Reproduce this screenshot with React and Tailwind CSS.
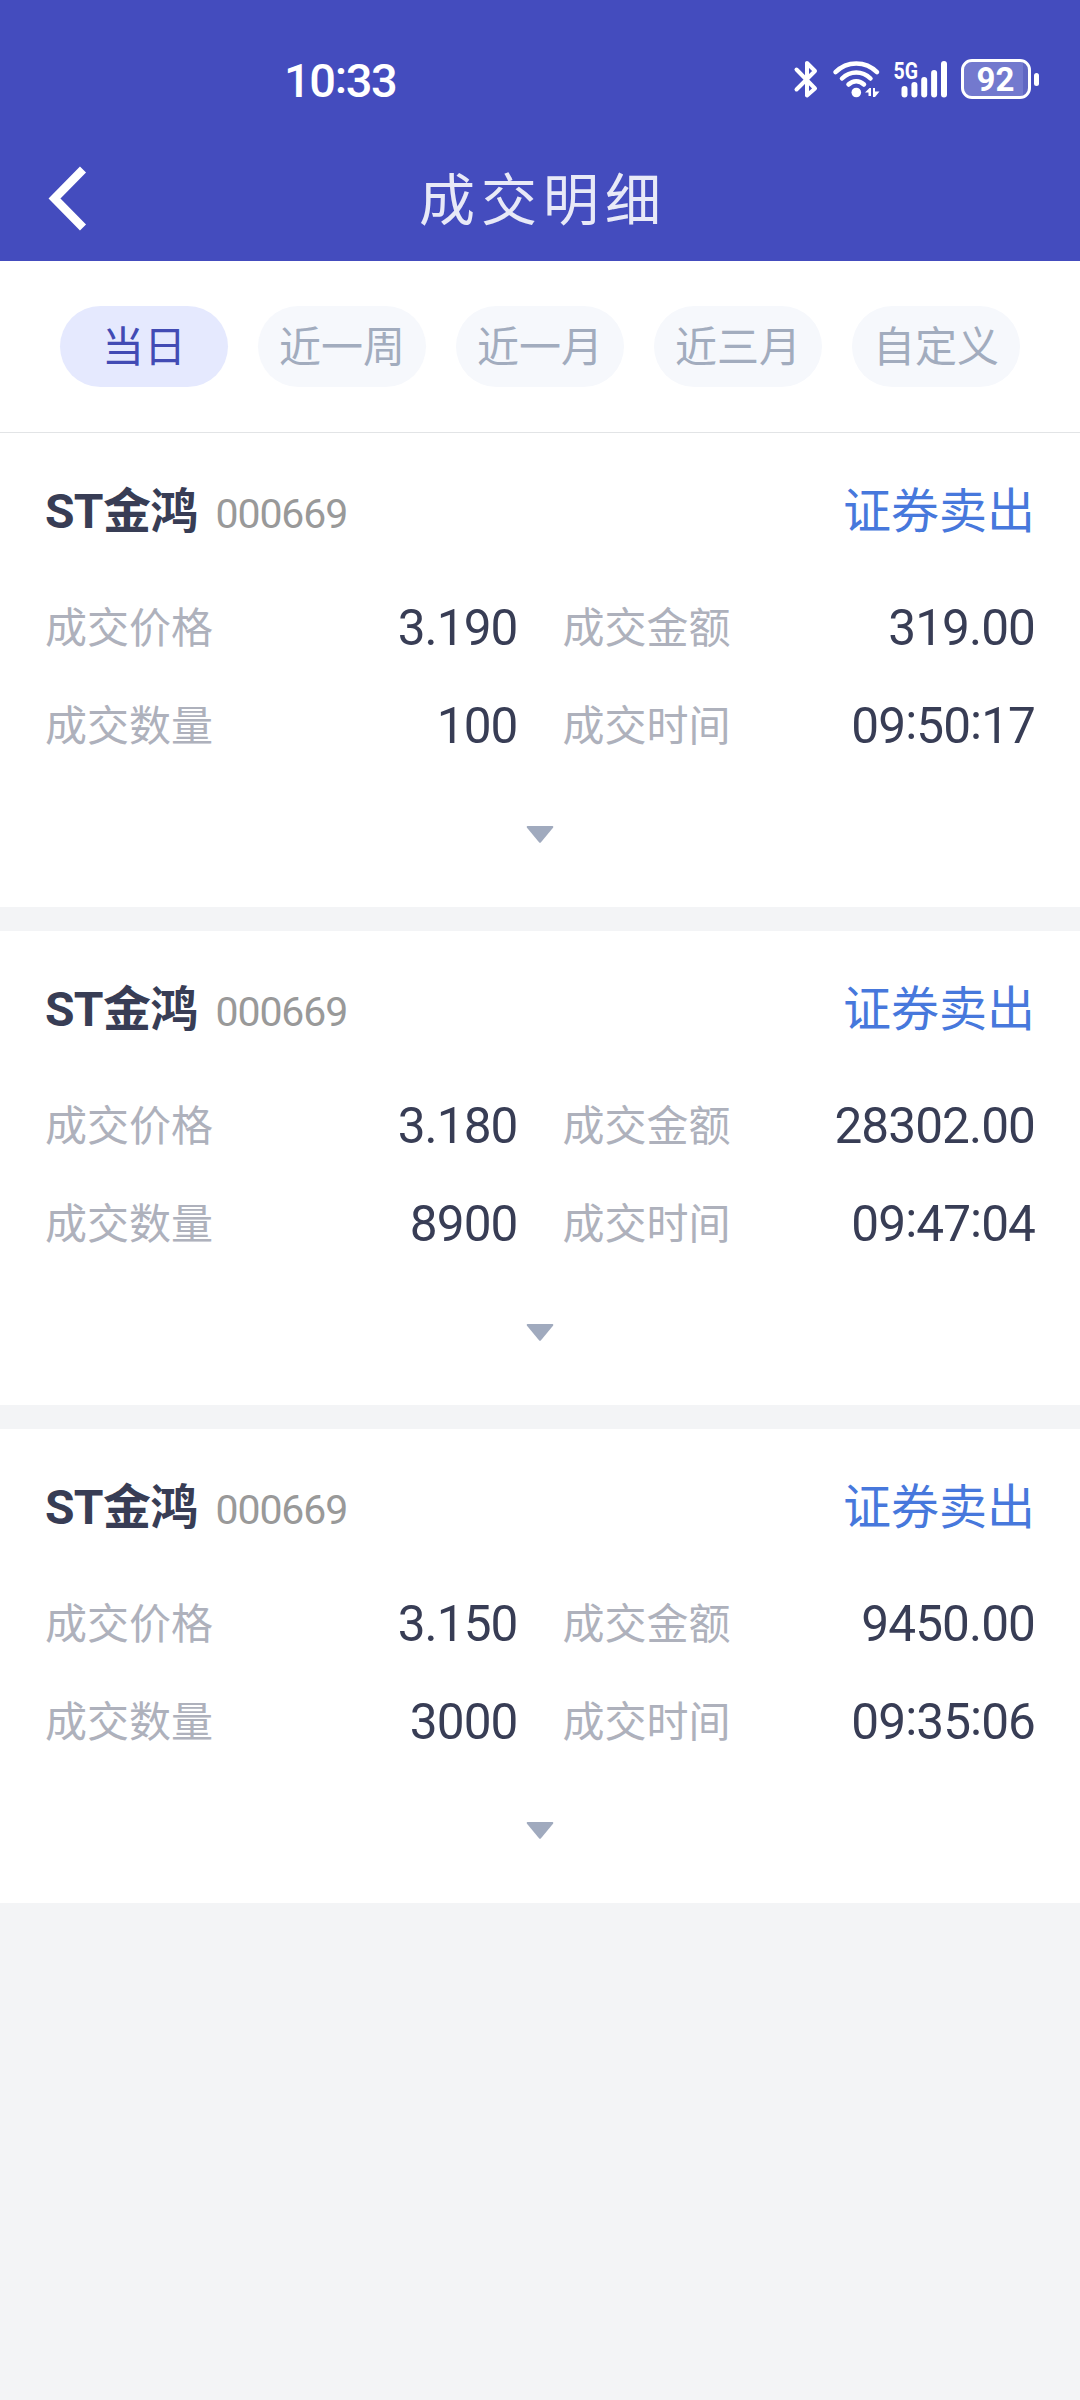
import React from "react";

const TABS = ["当日", "近一周", "近一月", "近三月", "自定义"];

const TRADES = [
  { name: "ST金鸿", code: "000669", side: "证券卖出", price: "3.190", amount: "319.00", qty: "100", time: "09:50:17" },
  { name: "ST金鸿", code: "000669", side: "证券卖出", price: "3.180", amount: "28302.00", qty: "8900", time: "09:47:04" },
  { name: "ST金鸿", code: "000669", side: "证券卖出", price: "3.150", amount: "9450.00", qty: "3000", time: "09:35:06" },
];

function Digits({ text }) {
  return text.split(/(:)/).map((part, i) =>
    part === ":" ? (
      <span key={i} className="align-[4px] leading-none">:</span>
    ) : (
      <React.Fragment key={i}>{part}</React.Fragment>
    )
  );
}

function StatusBar() {
  return (
    <div className="flex h-[140px] items-start justify-between pl-[284px] pr-[41px] pt-[59px] text-white">
      <div className="-mt-[6px] h-10 whitespace-nowrap text-[47px] font-medium leading-[42px] tracking-[-1.4px]">
        <Digits text="10:33" />
      </div>
      <div className="flex h-10 items-start">
        <svg width="26" height="40" viewBox="0 0 26 40" fill="none" stroke="currentColor" strokeWidth="4" strokeLinecap="round" strokeLinejoin="round">
          <path d="M3.500 10.500 22 29.500 14 36.500V23M3.500 30.500 22 12 14 4V21" />
        </svg>
        <svg className="ml-[13px]" width="50" height="40" viewBox="0 0 50 40" fill="none" stroke="currentColor" strokeWidth="4.500" strokeLinecap="round">
          <path d="M3.500 13.200C15 1.600 33.500 1.600 45 13.200" />
          <path d="M10 19.500C18.200 11.500 30.300 11.500 38.500 19.500" />
          <path d="M16.500 25.500C21 21.200 27.500 21.200 32 25.500" />
          <circle cx="24.300" cy="33.500" r="4.800" fill="currentColor" stroke="none" />
          <path d="M33 33.500l4.500-4.500h1.500v8h-2.500v-3.500zM41 29h2v3.500h4.500l-4.500 5.500h-2z" fill="currentColor" stroke="none" />
        </svg>
        <svg className="ml-[11px] overflow-visible" width="56" height="40" viewBox="0 0 56 40" fill="currentColor">
          <text x="0.500" y="20" fontSize="24" fontWeight="700" textLength="24.500" lengthAdjust="spacingAndGlyphs">5G</text>
          <rect x="8.500" y="27" width="6" height="11.500" rx="3" />
          <rect x="18.400" y="23" width="6" height="15.500" rx="3" />
          <rect x="28.200" y="18" width="6" height="20.500" rx="3" />
          <rect x="38.100" y="11" width="6" height="27.500" rx="3" />
          <rect x="48" y="2" width="6" height="36.500" rx="3" />
        </svg>
        <div className="ml-[12px] flex items-center gap-[3px]">
          <div className="flex h-10 w-[70px] items-center justify-center rounded-[11px] border-[3px] border-white bg-[linear-gradient(90deg,#7379ce_0_59px,#6067c3_59px)] bg-clip-padding pr-[1px] text-[33px] font-bold leading-none">
            92
          </div>
          <div className="h-[13px] w-[5px] rounded-full bg-white" />
        </div>
      </div>
    </div>
  );
}

function Field({ label, value }) {
  return (
    <div className="flex h-[98px] items-center justify-between">
      <span className="text-[42px] text-[#aeb1bc]">{label}</span>
      <span className="text-[49.500px] tracking-[-0.900px] text-[#383d55]">
        <Digits text={value} />
      </span>
    </div>
  );
}

function TradeCard({ trade }) {
  return (
    <article className="h-[474px] bg-white px-[45px] pt-[39px]">
      <div className="flex h-[80px] items-center justify-between">
        <div className="flex items-baseline">
          <h2 className="text-[48px] font-bold leading-[80px] tracking-[-0.700px] text-[#383d55]">{trade.name}</h2>
          <span className="ml-[18px] text-[41px] tracking-[-1.100px] text-[#999999]">{trade.code}</span>
        </div>
        <span className="text-[48px] leading-[80px] text-[#4778dc]">{trade.side}</span>
      </div>
      <div className="mt-[27px] grid grid-cols-2 gap-x-[45px]">
        <Field label="成交价格" value={trade.price} />
        <Field label="成交金额" value={trade.amount} />
        <Field label="成交数量" value={trade.qty} />
        <Field label="成交时间" value={trade.time} />
      </div>
      <button className="mt-[50px] flex w-full justify-center text-[#a0aabe]">
        <svg width="28" height="18" viewBox="0 0 28 18" fill="currentColor">
          <path d="M1.500 1h25c.800 0 1 1 .500 1.700L15 17.200c-.600.700-1.400.700-2 0L1 2.700C.500 2 .700 1 1.500 1z" />
        </svg>
      </button>
    </article>
  );
}

export default function App() {
  return (
    <main className="h-[2400px] w-[1080px] overflow-hidden bg-[#f3f4f6] font-['Roboto','Noto_Sans_CJK_SC',sans-serif]">
      <header className="h-[261px] bg-[#444cbe]">
        <StatusBar />
        <div className="grid h-[120px] grid-cols-[120px_1fr_120px] items-center">
          <button className="flex pb-[3px] pl-[48px] text-white">
            <svg width="40" height="66" viewBox="0 0 40 66" fill="none" stroke="currentColor" strokeWidth="8.500">
              <path d="M35 3.500 6.500 32.500 35 61.500" />
            </svg>
          </button>
          <h1 className="pl-[6px] pt-[2px] text-center text-[56px] leading-[118px] tracking-[6px] text-[#e8e9f7]">成交明细</h1>
        </div>
      </header>
      <nav className="flex h-[172px] gap-[30px] border-b border-[#e2e4e6] bg-white px-[60px] pt-[45px]">
        {TABS.map((tab, i) => (
          <button
            key={tab}
            className={
              i === 0
                ? "h-[81px] w-[168px] rounded-full bg-[#e5e9fe] pt-[2px] text-[42px] leading-[79px] text-[#424bb4]"
                : "h-[81px] w-[168px] rounded-full bg-[#f6f8fc] pt-[2px] text-[42px] leading-[79px] text-[#a2acbe]"
            }
          >
            {tab}
          </button>
        ))}
      </nav>
      <section className="flex flex-col gap-[24px]">
        {TRADES.map((trade) => (
          <TradeCard key={trade.time} trade={trade} />
        ))}
      </section>
    </main>
  );
}
